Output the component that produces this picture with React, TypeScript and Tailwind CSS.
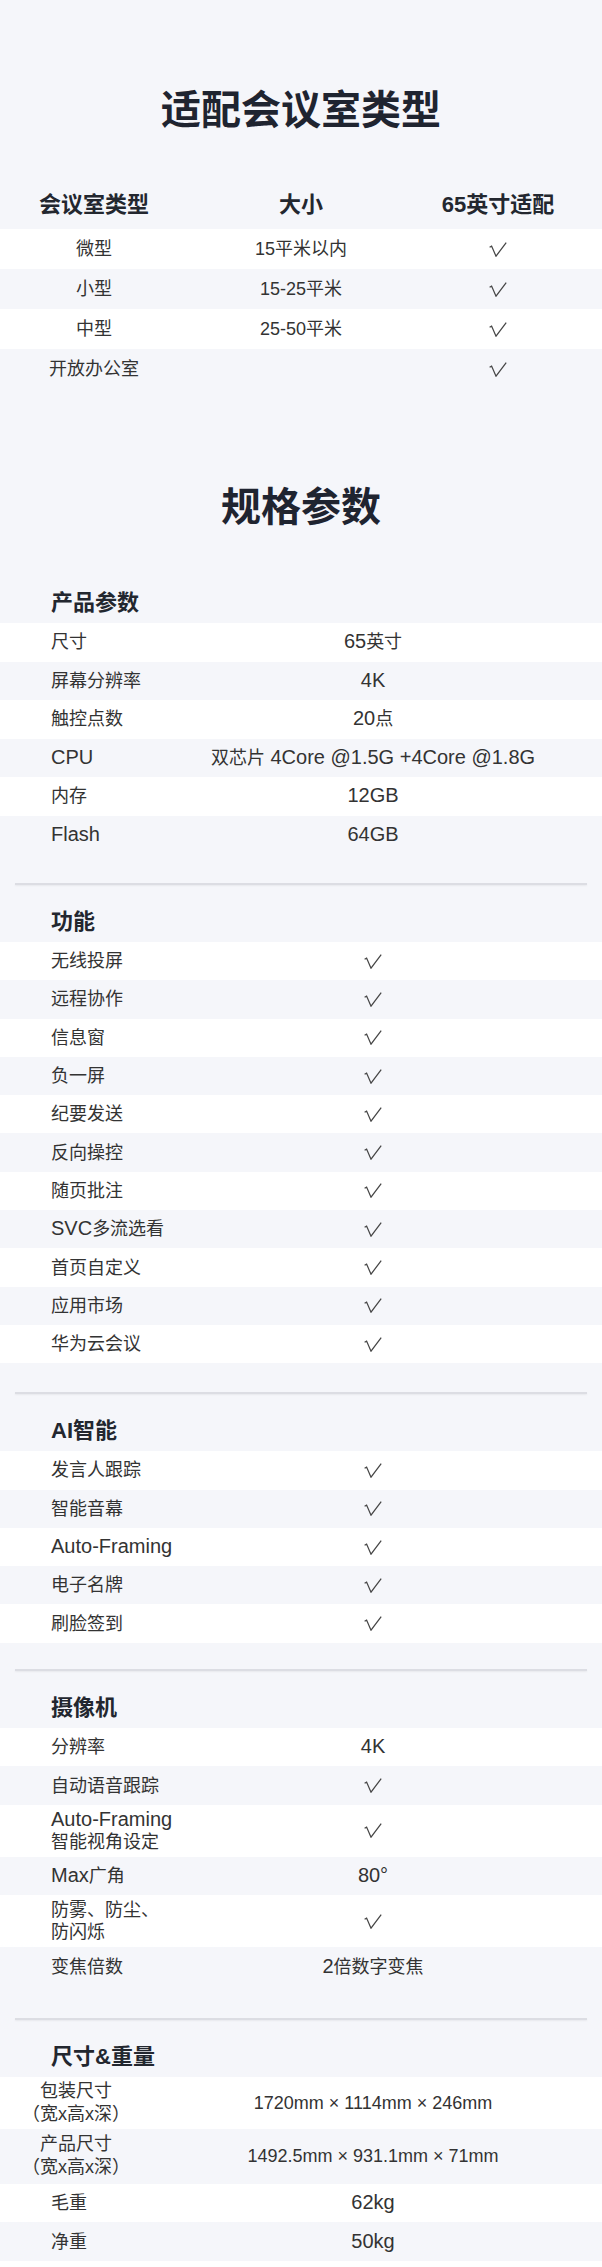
import React from "react";

type Row = { label: string; value: string; h: string; dims?: boolean };

const rooms: [string, string][] = [
  ["微型", "15平米以内"],
  ["小型", "15-25平米"],
  ["中型", "25-50平米"],
  ["开放办公室", ""],
];

const H = "h-[38.3px]";
const H5 = "h-[38.5px]";

const sections: { title: string; rows: Row[]; pb: string }[] = [
  {
    title: "产品参数",
    pb: "pb-[29px]",
    rows: [
      { label: "尺寸", value: "65英寸", h: H5 },
      { label: "屏幕分辨率", value: "4K", h: H5 },
      { label: "触控点数", value: "20点", h: H5 },
      { label: "CPU", value: "双芯片 4Core @1.5G +4Core @1.8G", h: H5 },
      { label: "内存", value: "12GB", h: H5 },
      { label: "Flash", value: "64GB", h: H5 },
    ],
  },
  {
    title: "功能",
    pb: "pb-[29px]",
    rows: [
      "无线投屏",
      "远程协作",
      "信息窗",
      "负一屏",
      "纪要发送",
      "反向操控",
      "随页批注",
      "SVC多流选看",
      "首页自定义",
      "应用市场",
      "华为云会议",
    ].map((l) => ({ label: l, value: "√", h: H })),
  },
  {
    title: "AI智能",
    pb: "pb-[26px]",
    rows: ["发言人跟踪", "智能音幕", "Auto-Framing", "电子名牌", "刷脸签到"].map((l) => ({
      label: l,
      value: "√",
      h: H,
    })),
  },
  {
    title: "摄像机",
    pb: "pb-[32px]",
    rows: [
      { label: "分辨率", value: "4K", h: H5 },
      { label: "自动语音跟踪", value: "√", h: H5 },
      { label: "Auto-Framing\n智能视角设定", value: "√", h: "h-[52px]" },
      { label: "Max广角", value: "80°", h: H5 },
      { label: "防雾、防尘、\n防闪烁", value: "√", h: "h-[52px]" },
      { label: "变焦倍数", value: "2倍数字变焦", h: H5 },
    ],
  },
  {
    title: "尺寸&重量",
    pb: "pb-[0px]",
    rows: [
      { label: "包装尺寸\n（宽x高x深）", value: "1720mm × 1114mm × 246mm", h: "h-[52px]", dims: true },
      { label: "产品尺寸\n（宽x高x深）", value: "1492.5mm × 931.1mm × 71mm", h: "h-[55px]", dims: true },
      { label: "毛重", value: "62kg", h: H5 },
      { label: "净重", value: "50kg", h: H5 },
    ],
  },
];

function Check() {
  return (
    <svg width="18" height="15" viewBox="0 0 18 15" className="inline-block align-middle">
      <path d="M0.6 5.2 L2.6 4.1 L7 14.2 L17.2 0.6" fill="none" stroke="#454545" strokeWidth="1.25" strokeLinejoin="miter" />
    </svg>
  );
}

const CJK = /([\u3000-\u303f\u4e00-\u9fff\uff00-\uffef]+)/;

function Mixed({ text }: { text: string }) {
  const parts = text.split(CJK).filter((p) => p.length > 0);
  return (
    <>
      {parts.map((p, i) =>
        CJK.test(p) ? (
          <span key={i}>{p}</span>
        ) : (
          <span key={i} className="text-[20px] leading-none">
            {p}
          </span>
        )
      )}
    </>
  );
}

function SpecRow({ row, idx }: { row: Row; idx: number }) {
  const bg = idx % 2 === 0 ? "bg-white" : "bg-[#f5f6fa]";
  const lines = row.label.split("\n");
  return (
    <div className={`${bg} ${row.h} grid grid-cols-[149px_346px] pl-[51px] items-center`}>
      {row.dims ? (
        <div className="-ml-[29px] w-[108px] text-center whitespace-nowrap leading-[23px]">
          {lines.map((l, i) => (
            <div key={i}>{l}</div>
          ))}
        </div>
      ) : (
        <div className="whitespace-nowrap leading-[22px]">
          {lines.map((l, i) => (
            <div key={i}>
              <Mixed text={l} />
            </div>
          ))}
        </div>
      )}
      <div className="text-center whitespace-nowrap leading-[22px] flex items-center justify-center">
        {row.value === "√" ? (
          <Check />
        ) : row.dims ? (
          <span>{row.value}</span>
        ) : (
          <span>
            <Mixed text={row.value} />
          </span>
        )}
      </div>
    </div>
  );
}

export default function App() {
  return (
    <div className="w-full bg-[#f5f6fa] font-['Liberation_Sans','Noto_Sans_CJK_SC',sans-serif] text-[18px] text-[#333]">
      {/* Section: meeting room types */}
      <div className="pt-[82px]">
        <h2 className="text-center text-[40px] leading-[56px] font-bold text-[#1f2430]">适配会议室类型</h2>
      </div>
      <div className="mt-[41px] h-[50px] grid grid-cols-[188px_226px_168px] items-center text-center text-[22px] font-semibold text-[#23272f]">
        <div>会议室类型</div>
        <div>大小</div>
        <div>65英寸适配</div>
      </div>
      {rooms.map((r, i) => (
        <div
          key={i}
          className={`${i % 2 === 0 ? "bg-white" : "bg-[#f5f6fa]"} h-[40px] grid grid-cols-[188px_226px_168px] items-center text-center`}
        >
          <div>{r[0]}</div>
          <div>{r[1]}</div>
          <div className="flex items-center justify-center">
            <Check />
          </div>
        </div>
      ))}

      {/* Section: specs */}
      <div className="mt-[90px]">
        <h2 className="text-center text-[40px] leading-[56px] font-bold text-[#1f2430]">规格参数</h2>
      </div>

      {sections.map((s, si) => (
        <div key={si} className={s.pb}>
          {si === 0 ? (
            <div className="mt-[48px] h-[40px] leading-[40px] pl-[51px] text-[22px] font-semibold text-[#23272f]">
              {s.title}
            </div>
          ) : (
            <div>
              <div className="mx-[15px] h-[2px] bg-[#dcdde3] shadow-[0_1px_2px_rgba(0,0,0,0.06)]" />
              <div className="mt-[17px] h-[40px] leading-[40px] pl-[51px] text-[22px] font-semibold text-[#23272f]">
                {s.title}
              </div>
            </div>
          )}
          {s.rows.map((r, ri) => (
            <SpecRow key={ri} row={r} idx={ri} />
          ))}
        </div>
      ))}
    </div>
  );
}
